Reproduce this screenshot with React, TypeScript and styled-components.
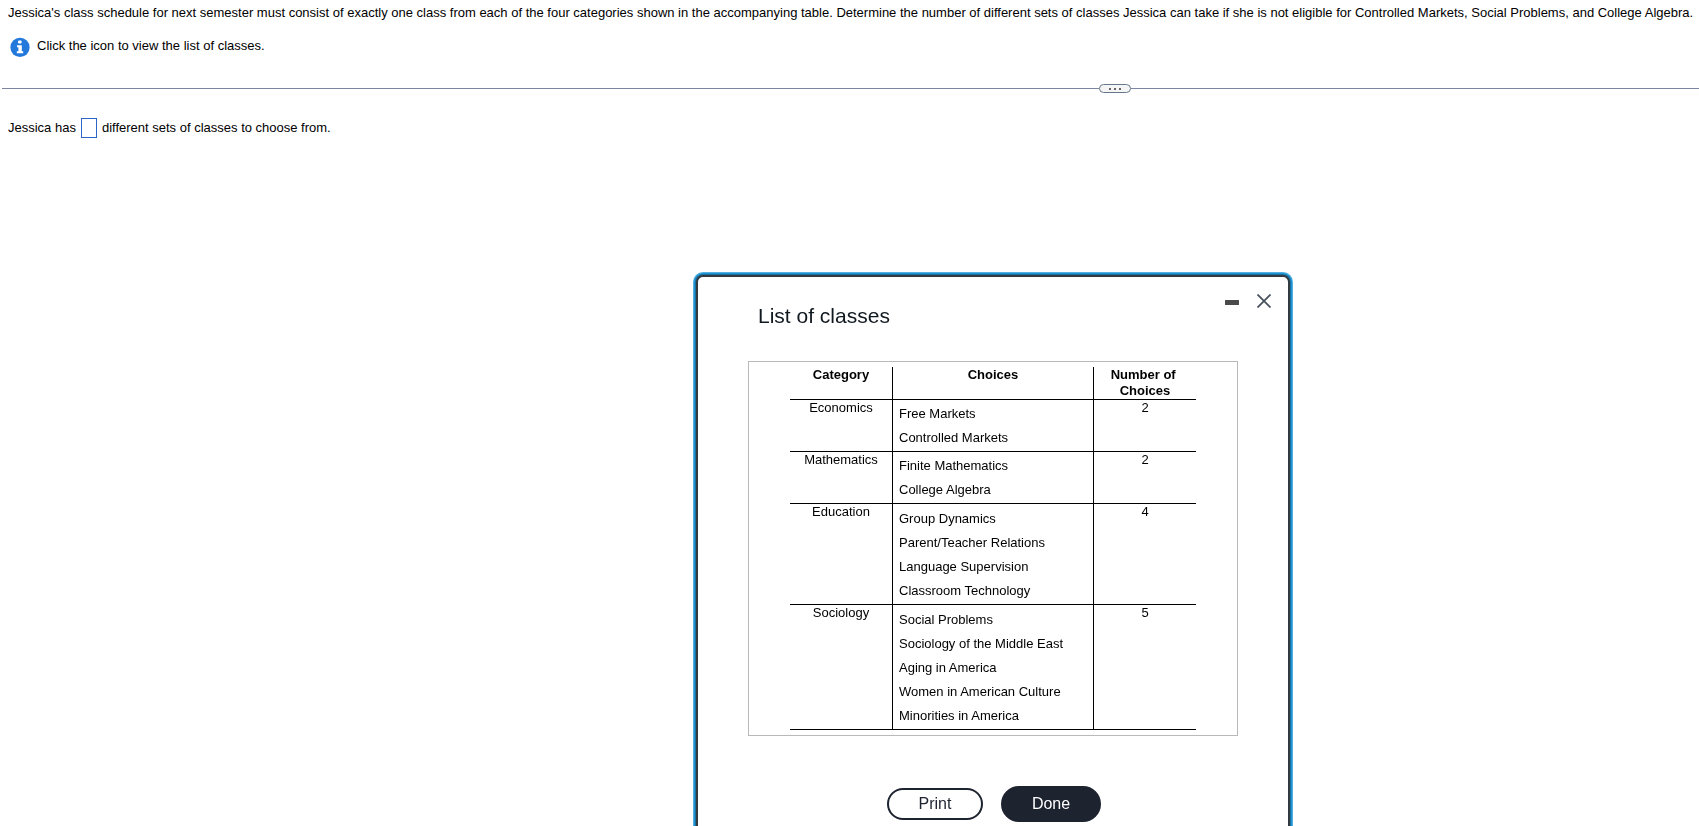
import React, { useState } from "react";
import styled, { createGlobalStyle, css } from "styled-components";

const GlobalStyle = createGlobalStyle`
  *, *::before, *::after { box-sizing: border-box; }
  body {
    margin: 0;
    background: #fff;
    color: #000;
    font: 13px/16px "Liberation Sans", Arial, sans-serif;
  }
  p, h2, ul { margin: 0; padding: 0; }
`;

const Prompt = styled.header`
  display: flex;
  flex-direction: column;
  gap: 16px;
  min-height: 88px;
  padding: 5px 0 0 8px;
`;

const Question = styled.p``;

const InfoLink = styled.button`
  display: flex;
  align-items: flex-start;
  align-self: flex-start;
  gap: 7px;
  padding: 0 0 0 2px;
  border: 0;
  background: none;
  color: inherit;
  font: inherit;
  line-height: 18px;
  cursor: pointer;
`;

const Divider = styled.div`
  display: flex;
  align-items: center;
  height: 9px;
  margin: -4px 0 0 2px;
`;

const Rule = styled.span<{ $grow: number }>`
  flex: ${(p) => p.$grow} 1 0;
  height: 1px;
  background: #7c86a0;
`;

const Handle = styled.button`
  display: flex;
  align-items: center;
  justify-content: center;
  gap: 3px;
  width: 32px;
  height: 9px;
  padding: 0;
  border: 1px solid #68788c;
  border-radius: 5px;
  background: #f5f5f5;
`;

const Dot = styled.span`
  width: 2px;
  height: 2px;
  background: #666;
`;

const Answer = styled.label`
  display: flex;
  align-items: center;
  padding: 25px 8px;
`;

const AnswerInput = styled.input`
  width: 16px;
  height: 20px;
  margin: 0 5px;
  padding: 0;
  border: 1px solid #2b66c9;
  background: #fff;
  font: inherit;
  text-align: center;
`;

const Dialog = styled.section`
  position: fixed;
  top: 275px;
  left: 696px;
  width: 594px;
  padding: 0 50px 72px;
  border: 2px solid #333a40;
  border-radius: 7px;
  background: #fff;
  box-shadow: 0 0 0 1px #1c6f9f, 0 0 0 2px #1d96d8, 0 0 0 3px #52aedd;
`;

const TitleBar = styled.header`
  display: flex;
  justify-content: space-between;
  height: 84px;
  padding-left: 10px;
`;

const Title = styled.h2`
  padding-top: 27px;
  color: #101820;
  font-size: 21px;
  line-height: 24px;
  font-weight: 400;
`;

const WindowControls = styled.div`
  display: flex;
  gap: 18px;
  height: 31px;
  margin-right: -33px;
  padding-top: 17px;
`;

const IconButton = styled.button`
  display: flex;
  padding: 0;
  border: 0;
  background: none;
  cursor: pointer;
`;

const Panel = styled.div`
  display: flex;
  justify-content: center;
  padding: 5px 0;
  border: 1px solid #b9b9b9;
`;

const ClassTable = styled.table`
  width: 406px;
  border-collapse: separate;
  border-spacing: 0;
  table-layout: fixed;
`;

const cell = css`
  padding: 0;
  border-bottom: 1px solid #000;
  text-align: center;
  vertical-align: top;

  & + & { border-left: 1px solid #000; }
`;

const HeadCell = styled.th<{ $width: number }>`
  ${cell}
  width: ${(p) => p.$width}px;
  & + & { border-left: 1px solid #000; }
`;

const Cell = styled.td`
  ${cell}
`;

const Choices = styled.ul<{ $long: boolean }>`
  padding: ${(p) => (p.$long ? 3 : 2)}px 0 1px 6px;
  list-style: none;
  line-height: 24px;
  text-align: left;
`;

const Actions = styled.footer`
  display: flex;
  justify-content: center;
  align-items: center;
  gap: 18px;
  padding: 50px 0 0 2px;
`;

const ActionButton = styled.button<{ $primary?: boolean }>`
  width: ${(p) => (p.$primary ? 100 : 96)}px;
  height: ${(p) => (p.$primary ? 36 : 32)}px;
  padding: 0;
  border: 2px solid #1e2330;
  border-radius: 18px;
  background: ${(p) => (p.$primary ? "#1e2330" : "#fff")};
  color: ${(p) => (p.$primary ? "#fff" : "#1e2330")};
  font: 16px/20px "Liberation Sans", Arial, sans-serif;
  cursor: pointer;
`;

const categories = [
  { name: "Economics", choices: ["Free Markets", "Controlled Markets"] },
  { name: "Mathematics", choices: ["Finite Mathematics", "College Algebra"] },
  {
    name: "Education",
    choices: ["Group Dynamics", "Parent/Teacher Relations", "Language Supervision", "Classroom Technology"],
  },
  {
    name: "Sociology",
    choices: [
      "Social Problems",
      "Sociology of the Middle East",
      "Aging in America",
      "Women in American Culture",
      "Minorities in America",
    ],
  },
];

const InfoIcon = () => (
  <svg width="20" height="20" viewBox="0 0 20 20" aria-hidden="true">
    <circle cx="10" cy="10.400" r="9.600" fill="#2378dc" />
    <rect x="8" y="3.600" width="3.600" height="3" rx="1" fill="#fff" />
    <path d="M7 8.200h4.800v6h1.400v2H6.800v-2h1.600v-4H7z" fill="#fff" />
  </svg>
);

const MinimizeIcon = () => (
  <svg width="14" height="14" viewBox="0 0 14 14" aria-hidden="true">
    <rect x="0" y="6" width="14" height="5" rx="0.500" fill="#4a4a4a" />
  </svg>
);

const CloseIcon = () => (
  <svg width="14" height="14" viewBox="0 0 14 14" aria-hidden="true">
    <path d="M0.500 0.500L13.500 13.500M13.500 0.500L0.500 13.500" stroke="#47525d" strokeWidth="1.800" />
  </svg>
);

export default function App() {
  const [open, setOpen] = useState(true);
  const close = () => setOpen(false);

  return (
    <>
      <GlobalStyle />
      <main>
        <Prompt>
          <Question>
            Jessica's class schedule for next semester must consist of exactly one class from each of the four
            categories shown in the accompanying table. Determine the number of different sets of classes Jessica can
            take if she is not eligible for Controlled Markets, Social Problems, and College Algebra.
          </Question>
          <InfoLink type="button" onClick={() => setOpen(true)}>
            <InfoIcon />
            Click the icon to view the list of classes.
          </InfoLink>
        </Prompt>
        <Divider>
          <Rule $grow={1097} />
          <Handle type="button" aria-label="Resize panels">
            <Dot />
            <Dot />
            <Dot />
          </Handle>
          <Rule $grow={568} />
        </Divider>
        <Answer>
          Jessica has
          <AnswerInput type="text" />
          different sets of classes to choose from.
        </Answer>
      </main>
      {open && (
        <Dialog role="dialog" aria-labelledby="classes-title">
          <TitleBar>
            <Title id="classes-title">List of classes</Title>
            <WindowControls>
              <IconButton type="button" aria-label="Minimize" onClick={close}>
                <MinimizeIcon />
              </IconButton>
              <IconButton type="button" aria-label="Close" onClick={close}>
                <CloseIcon />
              </IconButton>
            </WindowControls>
          </TitleBar>
          <Panel>
            <ClassTable>
              <thead>
                <tr>
                  <HeadCell scope="col" $width={102}>Category</HeadCell>
                  <HeadCell scope="col" $width={201}>Choices</HeadCell>
                  <HeadCell scope="col" $width={103}>
                    Number of&nbsp;
                    <br />
                    Choices
                  </HeadCell>
                </tr>
              </thead>
              <tbody>
                {categories.map(({ name, choices }) => (
                  <tr key={name}>
                    <Cell>{name}</Cell>
                    <Cell>
                      <Choices $long={choices.length > 2}>
                        {choices.map((choice) => (
                          <li key={choice}>{choice}</li>
                        ))}
                      </Choices>
                    </Cell>
                    <Cell>{choices.length}</Cell>
                  </tr>
                ))}
              </tbody>
            </ClassTable>
          </Panel>
          <Actions>
            <ActionButton type="button" onClick={() => window.print()}>Print</ActionButton>
            <ActionButton type="button" $primary onClick={close}>Done</ActionButton>
          </Actions>
        </Dialog>
      )}
    </>
  );
}
